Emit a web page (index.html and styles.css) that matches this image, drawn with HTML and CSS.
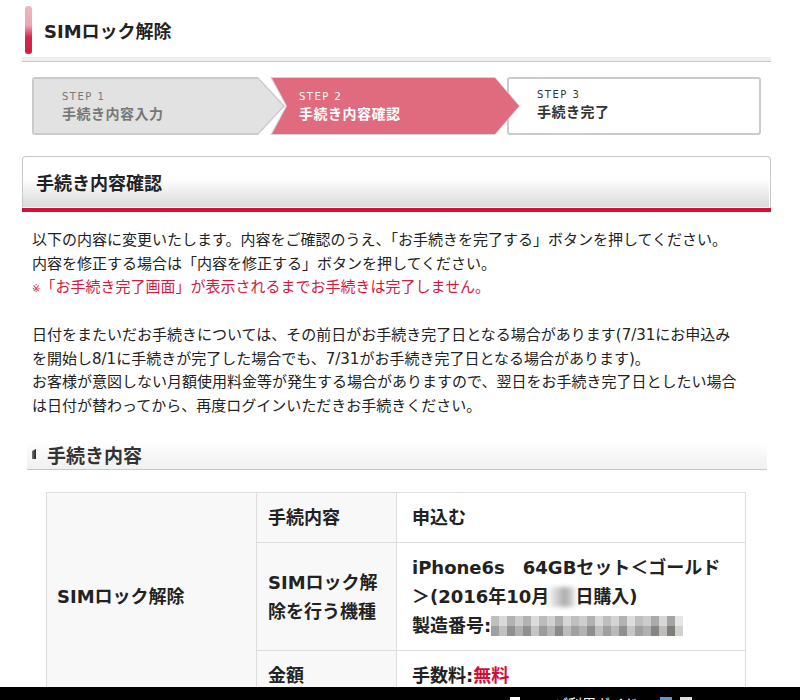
FILE: index.html
```html
<!DOCTYPE html>
<html lang="ja">
<head>
  <meta charset="UTF-8">
  <title>SIMロック解除</title>
  <link rel="stylesheet" href="styles.css">
</head>
<body>
  <div class="page">
    <div class="pagehead">
      <h1 class="pagetitle">SIMロック解除</h1>
    </div>
    <ol class="steps">
      <li class="step step1">
        <div class="step-in"><span class="step-no">STEP 1</span><span class="step-name">手続き内容入力</span></div>
      </li>
      <li class="step step2">
        <div class="step-in"><span class="step-no">STEP 2</span><span class="step-name">手続き内容確認</span></div>
      </li>
      <li class="step step3">
        <div class="step-in"><span class="step-no">STEP 3</span><span class="step-name">手続き完了</span></div>
      </li>
    </ol>
    <div class="box">
      <h2 class="box-title">手続き内容確認</h2>
      <div class="box-body">
        <p class="lead">以下の内容に変更いたします。内容をご確認のうえ、「お手続きを完了する」ボタンを押してください。<br>内容を修正する場合は「内容を修正する」ボタンを押してください。<br><span class="note"><small>※</small>「お手続き完了画面」が表示されるまでお手続きは完了しません。</span><br><br>日付をまたいだお手続きについては、その前日がお手続き完了日となる場合があります(7/31にお申込み<br>を開始し8/1に手続きが完了した場合でも、7/31がお手続き完了日となる場合があります)。<br>お客様が意図しない月額使用料金等が発生する場合がありますので、翌日をお手続き完了日としたい場合<br>は日付が替わってから、再度ログインいただきお手続きください。</p>
        <h3 class="sub-title">手続き内容</h3>
        <table class="detail">
          <tr>
            <th class="cat" rowspan="3">SIMロック解除</th>
            <th class="item">手続内容</th>
            <td>申込む</td>
          </tr>
          <tr>
            <th class="item">SIMロック解除を行う機種</th>
            <td>iPhone6s　64GBセット＜ゴールド<br>＞(2016年10月<span class="mask mask-day"></span>日購入)<br>製造番号:<span class="mask mask-serial"></span></td>
          </tr>
          <tr>
            <th class="item">金額</th>
            <td>手数料:<span class="free">無料</span></td>
          </tr>
        </table>
      </div>
    </div>
  </div>
  <div class="footbar">
    <span class="foot-icon"></span>
    <span class="foot-text">ご利用ガイド</span>
    <span class="foot-sq foot-blue"></span>
    <span class="foot-sq"></span>
  </div>
</body>
</html>
```

FILE: styles.css
```css
*{margin: 0;padding: 0;}
body{
  font-family: "DejaVu Sans", "Noto Sans CJK JP", sans-serif;
  color: #222;
  background: #fff;
}
.page{
  width: 749px;
  margin-left: 22px;
}

/* page title */
.pagehead{
  padding: 6px 0 3px;
  border-bottom: 4px solid #efefef;
  box-shadow: 0 1px 0 #c8c8c8;
}
.pagetitle{
  display: flex;
  align-items: center;
  gap: 12px;
  height: 48px;
  margin-left: 3px;
  font-size: 18px;
  font-weight: bold;
}
.pagetitle::before{
  content: "";
  width: 7px;
  height: 48px;
  border-radius: 3px;
  background: linear-gradient(#efb6c1 0, #e9a6b3 40%, #d4284a 65%, #cf1f3e 100%);
}

/* steps */
.steps{
  display: flex;
  list-style: none;
  height: 58px;
  margin: 16px 0 0 10px;
}
.step{
  position: relative;
  height: 58px;
  box-sizing: border-box;
}
.step-in{
  display: flex;
  flex-direction: column;
  height: 100%;
  box-sizing: border-box;
  padding: 11px 0 0 28px;
}
.step-no{
  font-size: 10px;
  line-height: 14px;
  letter-spacing: 1.5px;
}
.step-name{
  font-size: 14px;
  line-height: 20px;
  font-weight: bold;
  letter-spacing: 0.5px;
}
.step1{
  width: 253px;
  padding: 2px;
  background: #cbcbcb;
  border-radius: 3px 0 0 3px;
  clip-path: polygon(0 0, 226px 0, 253px 50%, 226px 100%, 0 100%);
  z-index: 2;
}
.step1 .step-in{
  background: #e2e2e2;
  color: #777;
  clip-path: polygon(0 0, 224px 0, 249px 50%, 224px 100%, 0 100%);
}
.step2{
  width: 250px;
  margin-left: -15px;
  padding: 1px;
  background: #d6d6d6;
  clip-path: polygon(0 0, 225px 0, 250px 50%, 225px 100%, 0 100%, 16px 50%);
  z-index: 3;
}
.step2 .step-in{
  padding-top: 12px;
  background: #e06a7e;
  color: #fff;
  clip-path: polygon(1px 0, 224px 0, 248px 50%, 224px 100%, 1px 100%, 16px 50%);
}
.step3{
  width: 254px;
  margin-left: -13px;
  border: 2px solid #cbcbcb;
  border-radius: 3px;
  background: #fff;
  color: #333;
  z-index: 1;
}
.step3 .step-in{
  padding-top: 9px;
}

/* confirm box */
.box{
  margin-top: 21px;
}
.box-title{
  height: 51px;
  padding-left: 13px;
  border: 1px solid #c8c8c8;
  border-bottom: none;
  border-radius: 4px 4px 0 0;
  background: linear-gradient(#fff 0, #fff 42%, #ececec 70%, #d8d8d8 100%);
  box-shadow: inset -1px -1px 0 #fff;
  font-size: 18px;
  line-height: 53px;
}
.box-body{
  border-top: 4px solid #d40f39;
  padding: 17px 0 0 10px;
}
.lead{
  font-size: 15px;
  line-height: 23.5px;
}
.note{
  color: #d4193f;
}
.note small{
  font-size: 10px;
}

.sub-title{
  position: relative;
  width: 740px;
  height: 29px;
  margin: 23px 0 0 -5px;
  padding-left: 20px;
  box-sizing: border-box;
  border-bottom: 1px solid #c8c8c8;
  background: linear-gradient(#fff, #f0f0f0);
  font-size: 19px;
  line-height: 30px;
  color: #333;
}
.sub-title::before{
  content: "";
  position: absolute;
  left: 5px;
  top: 8px;
  width: 4px;
  height: 10px;
  background: linear-gradient(90deg, #777, #222);
  clip-path: polygon(0 2px, 4px 0, 4px 100%, 0 100%);
}

/* detail table */
.detail{
  width: 700px;
  margin: 22px 0 0 14px;
  border-collapse: collapse;
  font-size: 18px;
  line-height: 29px;
}
.detail th, .detail td{
  border: 1px solid #ddd;
  padding: 10px 16px 10px 15px;
  text-align: left;
  vertical-align: middle;
}
.detail th{
  background: #f8f8f8;
}
.detail .cat{
  width: 210px;
  padding-left: 10px;
  box-sizing: border-box;
}
.detail .item{
  width: 140px;
  padding: 10px 12px 10px 11px;
  box-sizing: border-box;
}
.detail td{
  font-weight: bold;
}
.free{
  color: #d0103a;
}
.mask{
  display: inline-block;
  height: 20px;
  vertical-align: -4px;
}
.mask-day{
  width: 26px;
  background: linear-gradient(90deg, #f2f2f2, #ccc 35%, #aaa 60%, #e4e4e4);
  filter: blur(2px);
}
.mask-serial{
  width: 192px;
  background:
    linear-gradient(rgba(255,255,255,.25) 50%, rgba(0,0,0,.06) 50%),
    linear-gradient(90deg, #aaa 0 8px, #ccc 8px 16px, #999 16px 24px, #bbb 24px 32px, #9c9898 32px 40px, #d0d0d0 40px 48px, #a5a5a5 48px 56px, #c4c0c0 56px 64px, #8f9494 64px 72px, #c8c8c8 72px 80px, #aaa 80px 88px, #bdbdbd 88px 96px, #9b9696 96px 104px, #ccc 104px 112px, #a9a9a9 112px 120px, #c5c5c5 120px 128px, #999 128px 136px, #d2d2d2 136px 144px, #aaa 144px 152px, #bbb 152px 160px, #918d8d 160px 168px, #c9c9c9 168px 176px, #888480 176px 184px, #ddd 184px 192px);
  filter: blur(0.6px);
}

/* fixed bottom bar */
.footbar{
  position: fixed;
  left: 0;
  right: 0;
  bottom: 0;
  height: 13px;
  overflow: hidden;
  box-sizing: border-box;
  display: flex;
  align-items: flex-start;
  gap: 8px;
  padding: 10px 0 0 510px;
  background: #000;
  color: #fff;
  font-size: 14px;
  line-height: 1;
}
.foot-icon{
  width: 10px;
  height: 10px;
  background: #fff;
}
.foot-text{
  margin: 0 14px 0 26px;
}
.foot-sq{
  width: 12px;
  height: 12px;
  background: #ddd;
}
.foot-blue{
  background: #5a9bd5;
}
```
